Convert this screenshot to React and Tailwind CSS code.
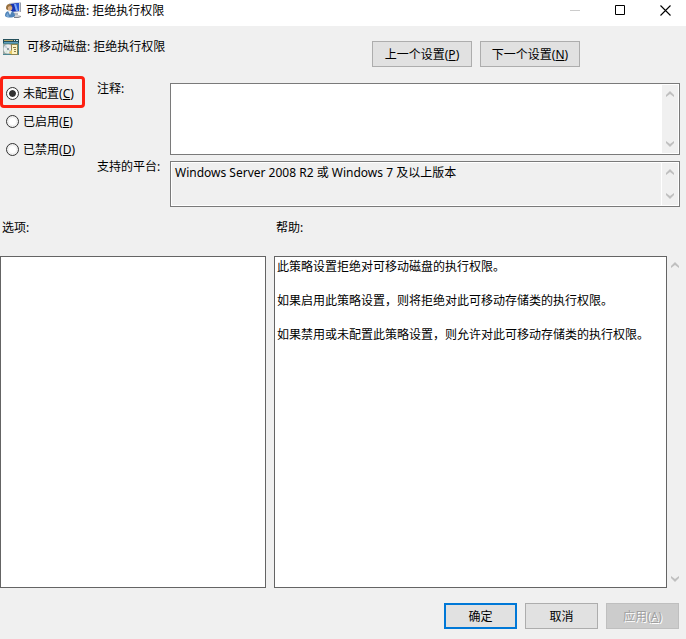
import { useState } from "react";

const states = [
  { id: "unset", label: "未配置", hotkey: "C" },
  { id: "enabled", label: "已启用", hotkey: "E" },
  { id: "disabled", label: "已禁用", hotkey: "D" },
];

const helpText = [
  "此策略设置拒绝对可移动磁盘的执行权限。",
  "如果启用此策略设置，则将拒绝对此可移动存储类的执行权限。",
  "如果禁用或未配置此策略设置，则允许对此可移动存储类的执行权限。",
];

function ComputerUserIcon() {
  return (
    <svg width="17" height="17" viewBox="0 0 17 17" aria-hidden="true">
      <path d="M4 1l11-1v10l-10 1z" fill="#c9cdd6" />
      <path d="M5 2l9-1v8l-8 1z" fill="#1733b0" />
      <path d="M9 2l5-1v8h-3z" fill="#2455d8" />
      <path d="M9 2h2l2 7h-2z" fill="#7fa8f5" />
      <path d="M15 0l1 1v9l-1 0z" fill="#9a9fab" />
      <path d="M9 11h4v2h-4z" fill="#b4b8c0" />
      <path d="M9 13h5l2 1-2 2H9z" fill="#cdd0d6" />
      <path d="M9 15h4l3-1v1l-3 1H9z" fill="#7e838d" />
      <circle cx="4.500" cy="6" r="2.800" fill="#dcae84" />
      <path d="M1 6c0-5 6-5 6-1L5 4 3 5v3C2 8 1 7 1 6z" fill="#96703f" />
      <path d="M0 14c0-4 2-5 5-5s5 2 5 5c-2 2-8 2-10 0z" fill="#4f83b8" />
      <path d="M3 9l2 4 2-4z" fill="#e9f2fb" />
      <path d="M1 14c1-3 2-3 2-3l1 4c-1 0-2 0-3-1z" fill="#7aa9d6" />
    </svg>
  );
}

function PolicyIcon() {
  return (
    <svg width="16" height="16" viewBox="0 0 16 16" aria-hidden="true">
      <path d="M0 0h16v16H0z" fill="#4d8791" />
      <path d="M0 0h16v4H0z" fill="#25505c" />
      <path d="M1 1h9v1H1z" fill="#b9a765" />
      <path d="M11 1h1v1h-1zM13 1h2v1h-2z" fill="#d8e4e4" />
      <path d="M1 3h14v1H1z" fill="#5f9fc0" />
      <path d="M0 5h15v10H0z" fill="#9aa7a5" />
      <circle cx="5" cy="10" r="4.500" fill="#eceeee" />
      <path d="M5 10L1 8l2-2zM5 10l4 2-2 2z" fill="#c3cdd9" />
      <path d="M5 10l3-4 1 2z" fill="#f2dbe2" />
      <path d="M5 10l-3 3 2 1z" fill="#d3ead5" />
      <circle cx="5" cy="10" r="1" fill="#75868a" />
      <path d="M8 5h7v11H8z" fill="#8e8450" />
      <path d="M9 6h5v9H9z" fill="#fdf3c3" />
      <path d="M10 8h3v1h-3zM11 10h2v1h-2zM11 12h2v1h-2z" fill="#8b7c48" />
      <path d="M6 13l3-2v4H7z" fill="#e3c763" />
    </svg>
  );
}

function Chevron({ down }) {
  return (
    <svg width="8" height="6" viewBox="0 0 8 6" className={down ? "rotate-180" : ""} aria-hidden="true">
      <path d="M0 4L4 0l4 4v2L4 3 0 6z" fill="#bfbfbf" />
    </svg>
  );
}

function ScrollStrip({ className }) {
  return (
    <div className={`flex w-4 shrink-0 flex-col items-center justify-between bg-[#f0f0f0] ${className}`}>
      <Chevron />
      <Chevron down />
    </div>
  );
}

function DialogButton({ className, ...props }) {
  return (
    <button type="button" className={`flex h-[26px] items-center justify-center ${className}`} {...props} />
  );
}

export default function App() {
  const [state, setState] = useState("unset");
  const [comment, setComment] = useState("");

  return (
    <div className="flex min-h-screen flex-col bg-[#f0f0f0] font-['Noto_Sans','Noto_Sans_CJK_SC',sans-serif] text-[12px] leading-[17px] text-black">
      <header className="flex h-[26px] items-start justify-between bg-white pr-[15px] pl-[5px]">
        <div className="flex gap-1 pt-0.5">
          <ComputerUserIcon />
          <h1>可移动磁盘: 拒绝执行权限</h1>
        </div>
        <div className="flex gap-[34px] pt-[5px]">
          <button type="button" disabled aria-label="最小化">
            <svg width="11" height="11" viewBox="0 0 11 11"><path d="M0 5h10v1H0z" fill="#ccc" /></svg>
          </button>
          <button type="button" aria-label="最大化">
            <svg width="11" height="11" viewBox="0 0 11 11"><path d="M.5.500h9v9h-9z" fill="none" stroke="#000" /></svg>
          </button>
          <button type="button" aria-label="关闭">
            <svg width="11" height="11" viewBox="0 0 11 11"><path d="M.5.500l10 10M10.500.500l-10 10" stroke="#000" strokeWidth="1.100" /></svg>
          </button>
        </div>
      </header>

      <div className="flex h-[50px] items-start pl-[3px]">
        <div className="flex w-[369px] items-end gap-2 pt-3">
          <PolicyIcon />
          <h2>可移动磁盘: 拒绝执行权限</h2>
        </div>
        <div className="flex gap-2 pt-[15px]">
          <DialogButton className="w-[100px] border border-[#adadad] bg-[#e1e1e1]">上一个设置(<u>P</u>)</DialogButton>
          <DialogButton className="w-[100px] border border-[#adadad] bg-[#e1e1e1]">下一个设置(<u>N</u>)</DialogButton>
        </div>
      </div>

      <div className="flex pr-1.5">
        <fieldset className="w-[97px] shrink-0">
          {states.map((s) => (
            <label
              key={s.id}
              className={
                s.id === "unset"
                  ? "flex h-8 w-[85px] items-center gap-1 rounded-[4px] border-3 border-[#fd1f10] pt-[3px] pl-[3px]"
                  : "flex h-7 items-center gap-1 pb-px pl-1.5"
              }
            >
              <input
                type="radio"
                name="state"
                checked={state === s.id}
                onChange={() => setState(s.id)}
                className="size-[13px] appearance-none rounded-full border border-[#333] bg-white bg-clip-content p-0.5 checked:bg-[#333] checked:shadow-[inset_0_0_0_2px_#fff]"
              />
              <span>{s.label}(<u>{s.hotkey}</u>)</span>
            </label>
          ))}
        </fieldset>
        <div className="flex flex-1 flex-col gap-[3px] pt-1">
          <div className="flex">
            <label htmlFor="comment" className="w-[73px] shrink-0">注释:</label>
            <div className="mt-[3px] flex h-[72px] flex-1 border border-[#7a7a7a] bg-white p-px">
              <textarea id="comment" value={comment} onChange={(e) => setComment(e.target.value)} className="flex-1 resize-none px-1 outline-none" />
              <ScrollStrip className="py-1.5" />
            </div>
          </div>
          <div className="flex">
            <label htmlFor="platform" className="w-[73px] shrink-0">支持的平台:</label>
            <div className="mt-[3px] flex h-[46px] flex-1 gap-px border border-[#7a7a7a] bg-white p-px">
              <textarea id="platform" readOnly value="Windows Server 2008 R2 或 Windows 7 及以上版本" className="flex-1 resize-none overflow-hidden bg-[#f0f0f0] px-[3px] pt-px outline-none" />
              <ScrollStrip className="py-1.5" />
            </div>
          </div>
        </div>
      </div>

      <div className="mt-3 flex flex-1 gap-2">
        <section className="flex w-[266px] shrink-0 flex-col">
          <h3 className="h-[37px] pl-0.5">选项:</h3>
          <div className="flex-1 border border-[#646464] bg-white" />
        </section>
        <section className="flex flex-1 flex-col">
          <h3 className="h-[37px] pl-0.5">帮助:</h3>
          <div className="flex flex-1">
            <div className="flex flex-1 flex-col gap-[17px] border border-[#646464] bg-white px-0.5 py-px">
              {helpText.map((line) => (
                <p key={line}>{line}</p>
              ))}
            </div>
            <ScrollStrip className="mr-[3px] py-1.5" />
          </div>
        </section>
      </div>

      <footer className="flex justify-end gap-2 pt-[15px] pr-[7px] pb-2.5">
        <DialogButton className="w-[73px] border-2 border-[#0078d7] bg-[#e1e1e1]">确定</DialogButton>
        <DialogButton className="w-[73px] border border-[#adadad] bg-[#e1e1e1]">取消</DialogButton>
        <DialogButton disabled className="w-[73px] border border-[#bfbfbf] bg-[#ccc] text-[#a0a0a0] text-shadow-[1px_1px_0_#fff]">应用(<u>A</u>)</DialogButton>
      </footer>
    </div>
  );
}
